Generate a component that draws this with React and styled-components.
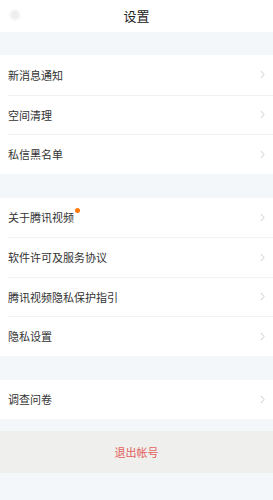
import React from "react";
import styled, { createGlobalStyle } from "styled-components";

const Global = createGlobalStyle`
  html, body { margin: 0; padding: 0; background: #f4f7f9; }
  body { font-family: "Noto Sans CJK SC", "Noto Sans", sans-serif; }
  * { box-sizing: border-box; }
`;

const Page = styled.div`
  width: 273px;
  height: 500px;
  background: #f4f7f9;
  display: flex;
  flex-direction: column;
  overflow: hidden;
`;

const Header = styled.div`
  height: 32px;
  padding-bottom: 1px;
  background: #fff;
  display: flex;
  align-items: center;
  justify-content: center;
  position: relative;
  font-size: 13px;
  color: #222;
`;

const Back = styled.div`
  position: absolute;
  left: 10px;
  top: 10px;
  width: 10px;
  height: 10px;
  border-radius: 50%;
  background: #eee;
  filter: blur(1px);
`;

const Gap = styled.div`
  height: ${(p) => p.$h}px;
  flex: none;
`;

const Group = styled.div`
  background: #fff;
  padding-left: 8px;
`;

const Row = styled.div`
  height: 39.5px;
  display: flex;
  align-items: center;
  justify-content: space-between;
  padding-right: 8px;
  border-top: ${(p) => (p.$first ? "none" : "1px solid #f1f2f3")};
  font-size: 11px;
  color: #333;
`;

const Label = styled.span`
  position: relative;
  display: inline-flex;
  align-items: center;
`;

const Dot = styled.span`
  position: absolute;
  right: -6px;
  top: -1px;
  width: 5px;
  height: 5px;
  border-radius: 50%;
  background: #ff7a0c;
`;

const Chevron = () => (
  <svg width="5" height="9" viewBox="0 0 5 9">
    <path d="M1 1l3 3.5-3 3.5" fill="none" stroke="#c4c6c8" strokeWidth="0.9" />
  </svg>
);

const Logout = styled.div`
  height: 42px;
  background: #efefed;
  display: flex;
  align-items: center;
  justify-content: center;
  font-size: 11px;
  color: #e2605a;
`;

const Item = ({ label, dot, first }) => (
  <Row $first={first}>
    <Label>
      {label}
      {dot && <Dot />}
    </Label>
    <Chevron />
  </Row>
);

export default function App() {
  return (
    <>
      <Global />
      <Page>
        <Header>
          <Back />
          设置
        </Header>
        <Gap $h={23} />
        <Group>
          <Item first label="新消息通知" />
          <Item label="空间清理" />
          <Item label="私信黑名单" />
        </Group>
        <Gap $h={24} />
        <Group>
          <Item first label="关于腾讯视频" dot />
          <Item label="软件许可及服务协议" />
          <Item label="腾讯视频隐私保护指引" />
          <Item label="隐私设置" />
        </Group>
        <Gap $h={24} />
        <Group>
          <Item first label="调查问卷" />
        </Group>
        <Gap $h={12} />
        <Logout>退出帐号</Logout>
      </Page>
    </>
  );
}
